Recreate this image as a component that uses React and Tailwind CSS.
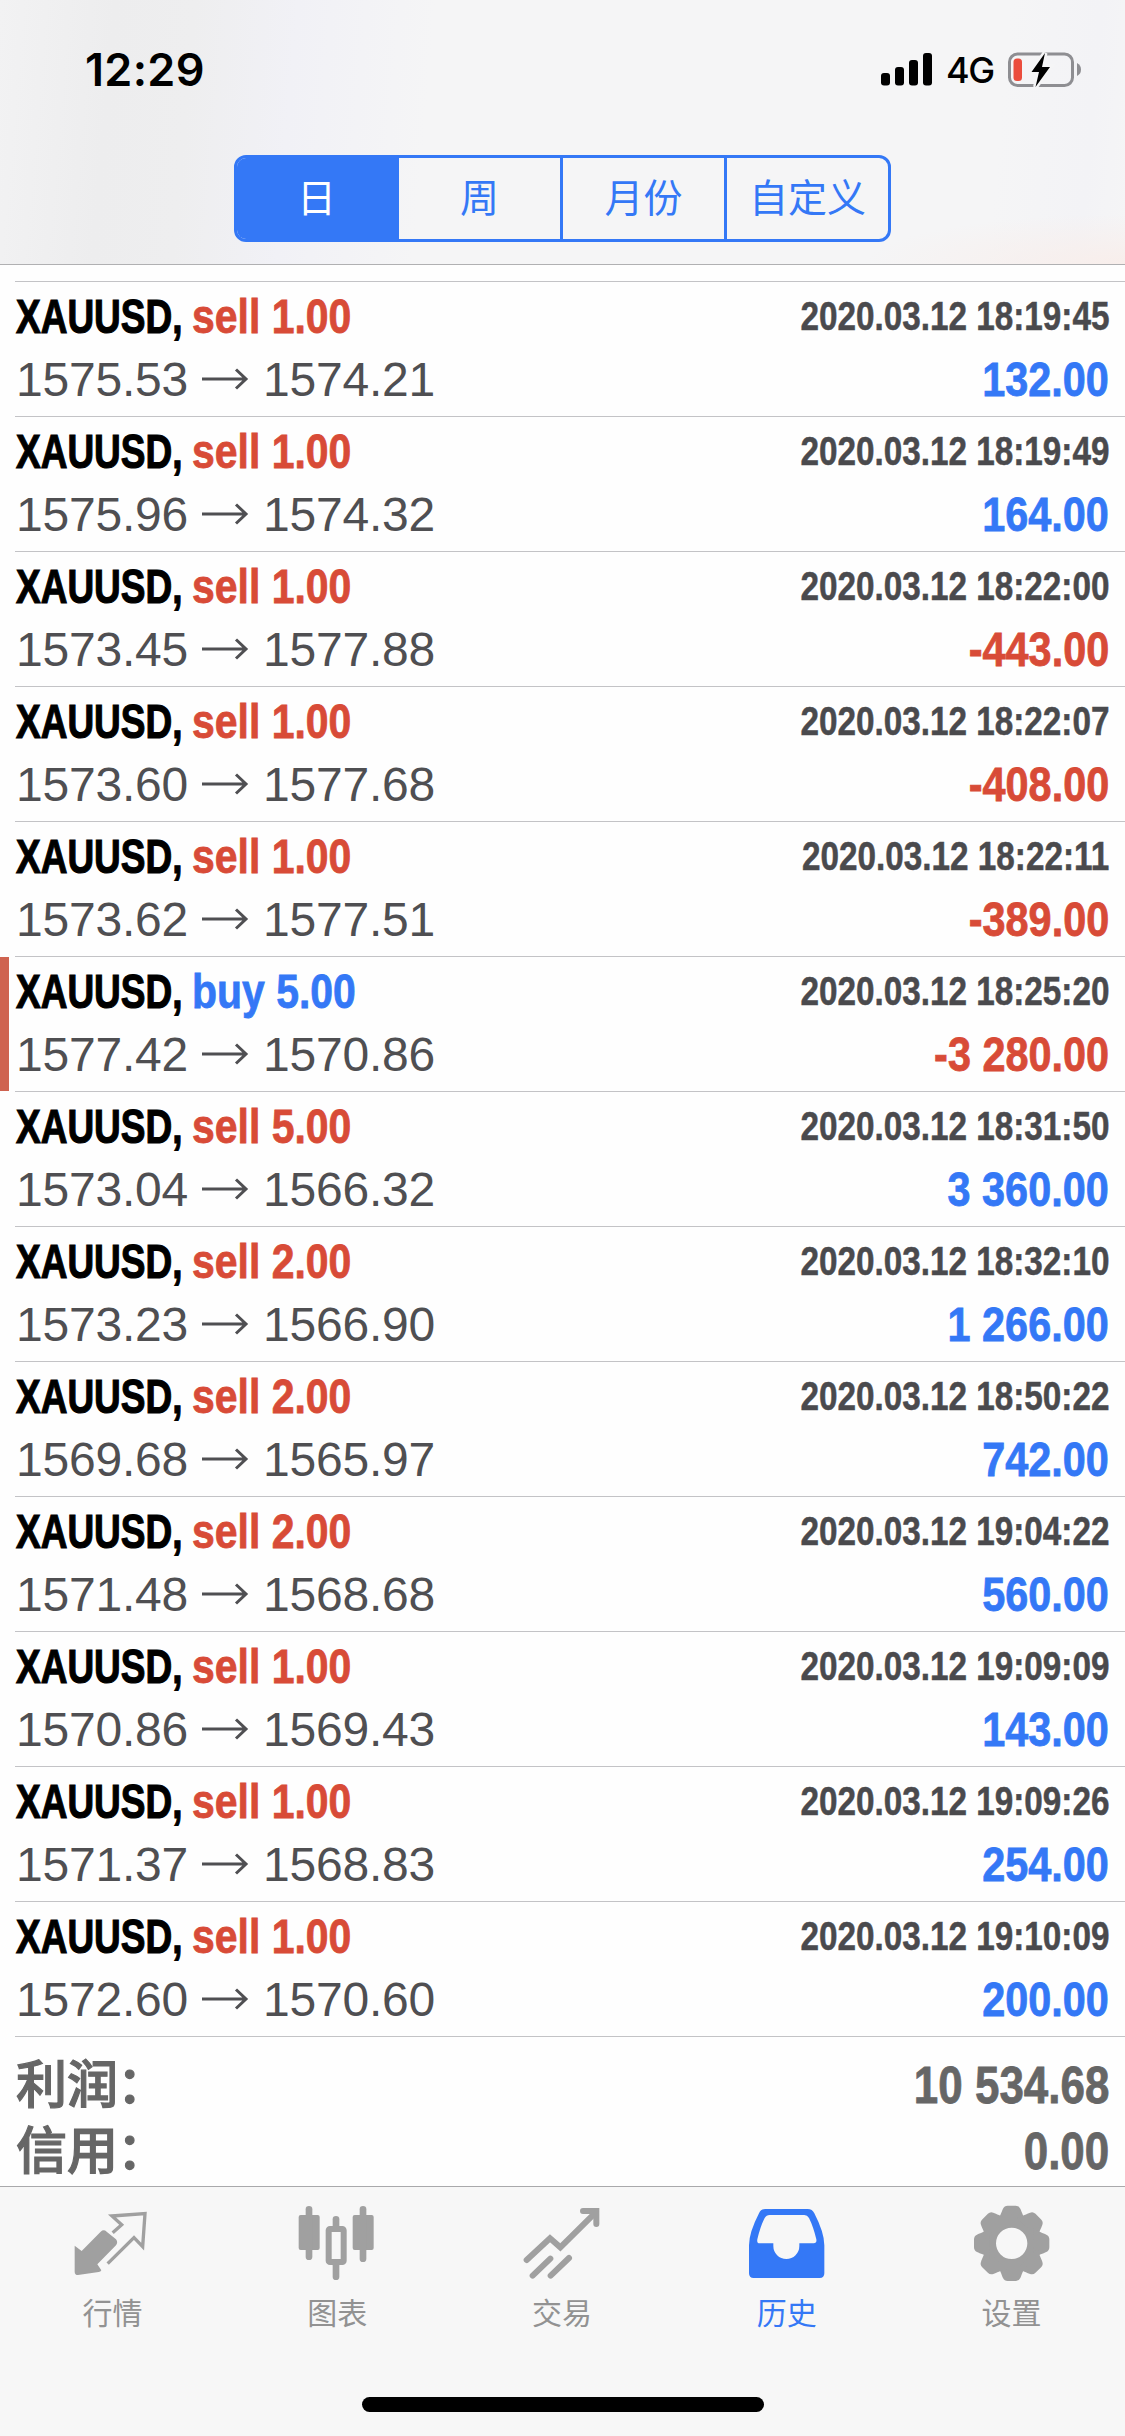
const periods = ['日', '周', '月份', '自定义'];

const deals = [
  { side: 'sell', volume: '1.00', time: '2020.03.12 18:19:45', open: '1575.53', close: '1574.21', profit: '132.00' },
  { side: 'sell', volume: '1.00', time: '2020.03.12 18:19:49', open: '1575.96', close: '1574.32', profit: '164.00' },
  { side: 'sell', volume: '1.00', time: '2020.03.12 18:22:00', open: '1573.45', close: '1577.88', profit: '-443.00' },
  { side: 'sell', volume: '1.00', time: '2020.03.12 18:22:07', open: '1573.60', close: '1577.68', profit: '-408.00' },
  { side: 'sell', volume: '1.00', time: '2020.03.12 18:22:11', open: '1573.62', close: '1577.51', profit: '-389.00' },
  { side: 'buy', volume: '5.00', time: '2020.03.12 18:25:20', open: '1577.42', close: '1570.86', profit: '-3 280.00', marked: true },
  { side: 'sell', volume: '5.00', time: '2020.03.12 18:31:50', open: '1573.04', close: '1566.32', profit: '3 360.00' },
  { side: 'sell', volume: '2.00', time: '2020.03.12 18:32:10', open: '1573.23', close: '1566.90', profit: '1 266.00' },
  { side: 'sell', volume: '2.00', time: '2020.03.12 18:50:22', open: '1569.68', close: '1565.97', profit: '742.00' },
  { side: 'sell', volume: '2.00', time: '2020.03.12 19:04:22', open: '1571.48', close: '1568.68', profit: '560.00' },
  { side: 'sell', volume: '1.00', time: '2020.03.12 19:09:09', open: '1570.86', close: '1569.43', profit: '143.00' },
  { side: 'sell', volume: '1.00', time: '2020.03.12 19:09:26', open: '1571.37', close: '1568.83', profit: '254.00' },
  { side: 'sell', volume: '1.00', time: '2020.03.12 19:10:09', open: '1572.60', close: '1570.60', profit: '200.00' },
];

const totals = [
  { label: '利润', value: '10 534.68' },
  { label: '信用', value: '0.00' },
];

const QuotesIcon = () => (
  <svg viewBox="0 0 240 240" className="h-20 w-20" fill="currentColor">
    <path d="M8 131 L29 147 L86 89 Q95 81 104 89 L132 112 Q139 121 132 130 L76 187 L88 205 Q86 210 80 210 L18 219 Q8 219 8 209 Z" />
    <path d="M122 92 L149 68 L120 42 L219 35 L212 134 L186 107 L107 185" fill="none" stroke="currentColor" strokeWidth="10" />
  </svg>
);

const ChartIcon = () => (
  <svg viewBox="0 0 240 240" className="h-20 w-20" fill="currentColor">
    <rect x="5" y="39" width="63" height="105" rx="6" />
    <rect x="26" y="12" width="20" height="162" rx="10" />
    <rect x="167" y="39" width="63" height="105" rx="6" />
    <rect x="188" y="12" width="20" height="168" rx="10" />
    <rect x="107" y="42" width="20" height="40" rx="10" />
    <rect x="107" y="180" width="20" height="54" rx="10" />
    <rect x="95" y="81" width="45" height="99" rx="4" fill="none" stroke="currentColor" strokeWidth="18" />
  </svg>
);

const TradeIcon = () => (
  <svg viewBox="0 0 240 240" className="h-20 w-20" fill="none" stroke="currentColor" strokeWidth="18" strokeLinecap="round">
    <path d="M14 174 L84 109 L115 136 L218 34" />
    <path d="M183 27 H223 V66" />
    <path d="M32 221 L85 170" />
    <path d="M86 221 L141 168" />
  </svg>
);

const HistoryIcon = () => (
  <svg viewBox="0 0 240 240" className="h-20 w-20" fill="currentColor">
    <path
      fillRule="evenodd"
      d="M55 21 H182 Q196 21 202 34 Q232 92 232 130 V214 Q232 228 218 228 H20 Q6 228 6 214 V130 Q6 92 36 34 Q42 21 55 21 Z
         M68 39 Q58 39 53 48 Q40 74 31 112 Q29 124 38 124 H79 V132 A39 39 0 0 0 157 132 V124 H200 Q210 124 208 112 Q199 74 186 48 Q181 39 172 39 Z"
    />
  </svg>
);

const SettingsIcon = () => (
  <svg viewBox="0 0 240 240" className="h-20 w-20" fill="currentColor">
    <circle cx="119" cy="124" r="68" fill="none" stroke="currentColor" strokeWidth="42" />
    {[0, 45, 90, 135, 180, 225, 270, 315].map((angle) => (
      <path
        key={angle}
        transform={`rotate(${angle} 119 124)`}
        d="M74 58 C86 42 88 30 93 20 Q97 11 107 11 H131 Q141 11 145 20 C150 30 152 42 164 58 Z"
      />
    ))}
  </svg>
);

const tabs = [
  { label: '行情', Icon: QuotesIcon },
  { label: '图表', Icon: ChartIcon },
  { label: '交易', Icon: TradeIcon },
  { label: '历史', Icon: HistoryIcon, active: true },
  { label: '设置', Icon: SettingsIcon },
];

const StatusBar = () => (
  <div className="mt-[39px] flex h-[61px] items-center justify-between pr-[43px] pl-[85px] text-black">
    <span className="font-['Inter',sans-serif] text-[45px] font-semibold tracking-[0.3px]">12:29</span>
    <div className="flex items-center">
      <svg viewBox="0 0 52 34" className="h-[34px] w-[52px]">
        <rect x="0" y="20" width="9" height="12.5" rx="3" />
        <rect x="14" y="14" width="9" height="18.5" rx="3" />
        <rect x="28" y="7" width="9" height="25.5" rx="3" />
        <rect x="42" y="0" width="9" height="32.5" rx="3" />
      </svg>
      <span className="ml-[13px] w-[62px] font-['Inter',sans-serif] text-[36px] font-medium tracking-[-1.4px]">4G</span>
      <svg viewBox="0 0 74 36" className="h-9 w-[74px]">
        <rect x="1.5" y="2" width="63" height="31.5" rx="8" fill="none" stroke="#8e8e92" strokeWidth="3" />
        <path d="M69 11 Q73 13 73 17.5 Q73 22 69 24 Z" fill="#8e8e92" />
        <rect x="5.5" y="6.500" width="8.500" height="22.500" rx="3.500" fill="#eb4d3d" />
        <path d="M37 1 L23.500 20 H31 L27.500 35 L42 15 H34 Z" stroke="#f5f5f6" strokeWidth="5" />
        <path d="M37 1 L23.500 20 H31 L27.500 35 L42 15 H34 Z" />
      </svg>
    </div>
  </div>
);

const PeriodPicker = () => (
  <div className="mx-auto mt-[55px] flex h-[87px] w-[657px] divide-x-[3px] divide-[#3478f6] overflow-hidden rounded-[12px] border-[3px] border-[#3478f6] text-[39px]">
    {periods.map((period, i) => (
      <div
        key={period}
        className={`flex items-center justify-center pt-px ${i === 0 ? 'w-[162px] bg-[#3478f6] text-white' : 'flex-1 text-[#3478f6]'}`}
      >
        {period}
      </div>
    ))}
  </div>
);

const DealRow = ({ deal }) => {
  const loss = deal.profit.startsWith('-');

  return (
    <div className="flex h-[135px]">
      <div className={`mt-px w-[9px] ${deal.marked ? 'bg-[#cf6350]' : ''}`} />
      <div className="ml-[6px] flex flex-1 justify-between border-t border-[#c3c3c6] pt-[6px] pr-[16px] pl-px">
        <div>
          <div className="flex h-[56px] text-[49px] leading-[56px] font-bold whitespace-nowrap">
            <span className="w-[176px] origin-left scale-x-[0.755] text-black [-webkit-text-stroke:1.2px_currentColor]">XAUUSD,</span>
            <span
              className={`origin-left scale-x-[0.835] [-webkit-text-stroke:0.8px_currentColor] ${deal.side === 'buy' ? 'text-[#3478f6]' : 'text-[#d84b37]'}`}
            >
              {deal.side} {deal.volume}
            </span>
          </div>
          <div className="mt-[8px] flex h-[56px] text-[48px] leading-[56px] text-[#4f4f52]">
            <span className="w-[186px] tracking-[-0.2px]">{deal.open}</span>
            <svg viewBox="0 0 48 56" className="h-14 w-12" fill="none" stroke="currentColor" strokeWidth="3">
              <path d="M0 27 H44 M34 17.500 L44 27 L34 36.500" />
            </svg>
            <span className="ml-[13px] tracking-[-0.2px]">{deal.close}</span>
          </div>
        </div>
        <div className="flex flex-col items-end font-bold">
          <span className="h-[56px] origin-right scale-x-[0.832] text-[40px] leading-[56px] text-[#4a4a4d] [-webkit-text-stroke:0.5px_currentColor]">
            {deal.time}
          </span>
          <span
            className={`mt-[7px] origin-right scale-x-[0.845] text-[49px] leading-[56px] [-webkit-text-stroke:0.8px_currentColor] ${loss ? 'text-[#d84b37]' : 'text-[#3478f6]'}`}
          >
            {deal.profit}
          </span>
        </div>
      </div>
    </div>
  );
};

const TabBar = () => (
  <nav className="h-[250px] border-t border-[#a9a9ab] bg-[#f7f7f7] pt-[15px]">
    <div className="flex pr-px">
      {tabs.map(({ label, Icon, active }) => (
        <div key={label} className={`flex flex-1 flex-col items-center ${active ? 'text-[#3478f6]' : 'text-[#a0a0a0]'}`}>
          <Icon />
          <span className={`mt-[10px] text-[30px] leading-[44px] ${active ? '' : 'text-[#929292]'}`}>{label}</span>
        </div>
      ))}
    </div>
    <div className="mx-auto mt-[61px] h-[15px] w-[402px] rounded-full bg-black" />
  </nav>
);

export default function App() {
  return (
    <div className="flex h-[2436px] w-[1125px] flex-col overflow-hidden bg-[#fefefe] font-['Liberation_Sans','Noto_Sans_CJK_SC',sans-serif]">
      <header className="flow-root h-[265px] border-b border-[#b0b0b2] bg-[radial-gradient(ellipse_260px_50px_at_100%_100%,#f8eeeb,transparent),linear-gradient(95deg,#f2f2f3_0%,#ededee_10%,#eeeeef_17%,#f1f1f6_26%,#f5f5f6_38%,#f5f5f6_88%,#f3f3f6_96%,#f5f5f6_100%)]">
        <StatusBar />
        <PeriodPicker />
      </header>

      <main className="flex-1 pt-[16px]">
        {deals.map((deal) => (
          <DealRow key={deal.time} deal={deal} />
        ))}
        <div className="ml-[15px] border-t border-[#c3c3c6] pt-[15px] pr-[16px] pl-px text-[#666]">
          {totals.map(({ label, value }) => (
            <div key={label} className="flex h-[66px] justify-between text-[52px] leading-[66px] whitespace-nowrap">
              <span className="mt-px text-[51px] font-medium [-webkit-text-stroke:1.2px_currentColor]">
                {label}
                <span className="-ml-px">：</span>
              </span>
              <span className="origin-right scale-x-[0.845] font-bold [-webkit-text-stroke:0.8px_currentColor]">{value}</span>
            </div>
          ))}
        </div>
      </main>

      <TabBar />
    </div>
  );
}
